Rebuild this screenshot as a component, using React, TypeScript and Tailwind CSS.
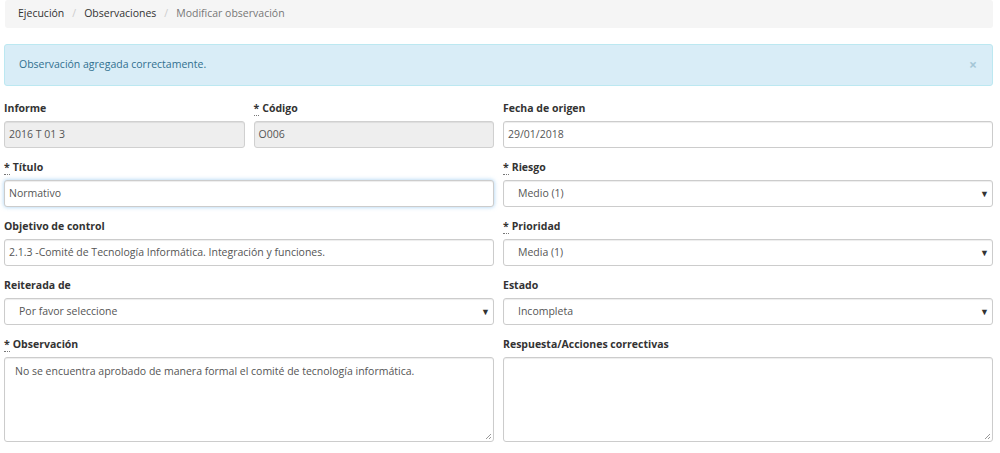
import React from "react";

const font = { fontFamily: '"Open Sans", "Liberation Sans", sans-serif' };

const Req = () => (
  <abbr title="Requerido" className="no-underline border-b border-dotted border-[#777] cursor-help mr-[3px]">
    *
  </abbr>
);

const Label: React.FC<{ text: string; req?: boolean }> = ({ text, req }) => (
  <label className="block text-[10.5px] leading-[17px] font-bold text-[#333] mb-[4px]">
    {req && <Req />}
    {text}
  </label>
);

const Input: React.FC<{ value: string; disabled?: boolean; focus?: boolean }> = ({ value, disabled, focus }) => (
  <div
    className={
      "h-[27px] rounded-[3px] border px-[4px] flex items-center text-[10.5px] text-[#555] " +
      (disabled ? "bg-[#eeeeee] border-[#d0d0d0] " : "bg-white border-[#ccc] ") +
      (focus ? "border-[#66afe9] shadow-[inset_0_1px_1px_rgba(0,0,0,0.075),0_0_4px_rgba(102,175,233,0.6)]" : "shadow-[inset_0_1px_1px_rgba(0,0,0,0.075)]")
    }
  >
    {value}
  </div>
);

const Select: React.FC<{ value: string }> = ({ value }) => (
  <div className="h-[27px] rounded-[3px] border border-[#ccc] bg-white pl-[14px] pr-[3px] flex items-center justify-between text-[10.5px] text-[#555] shadow-[inset_0_1px_1px_rgba(0,0,0,0.075)]">
    <span>{value}</span>
    <span className="text-[9px] text-[#333]">▼</span>
  </div>
);

const TextArea: React.FC<{ value?: string }> = ({ value }) => (
  <div className="relative h-[85px] rounded-[3px] border border-[#ccc] bg-white px-[10px] py-[5px] text-[10.5px] leading-[17px] text-[#555] shadow-[inset_0_1px_1px_rgba(0,0,0,0.075)]">
    {value}
    <svg className="absolute right-[1px] bottom-[1px]" width="7" height="7" viewBox="0 0 7 7">
      <path d="M6 1 L1 6 M6 4 L4 6" stroke="#999" strokeWidth="1" />
    </svg>
  </div>
);

const Field: React.FC<{ label: string; req?: boolean; span?: string; children: React.ReactNode }> = ({ label, req, span, children }) => (
  <div className={span ?? "col-span-2"}>
    <Label text={label} req={req} />
    {children}
  </div>
);

export default function App() {
  return (
    <div className="w-[1000px] h-[453px] bg-white pl-[4px] pr-[7px] overflow-hidden" style={font}>
      <ol className="ml-[1px] h-[28px] bg-[#f5f5f5] rounded-[3px] flex items-center px-[13px] text-[10.5px]">
        <li className="text-[#333]">Ejecución</li>
        <li className="text-[#ccc] px-[8px]">/</li>
        <li className="text-[#333]">Observaciones</li>
        <li className="text-[#ccc] px-[8px]">/</li>
        <li className="text-[#777]">Modificar observación</li>
      </ol>

      <div className="mt-[16px] h-[42px] rounded-[3px] border border-[#bce8f1] bg-[#d9edf7] flex items-center justify-between pl-[14px] pr-[15px] text-[10.5px] text-[#31708f]">
        <span>Observación agregada correctamente.</span>
        <span className="text-[14px] font-bold text-[#31708f] opacity-30 leading-none">×</span>
      </div>

      <div className="mt-[14px] grid grid-cols-4 gap-x-[9px] gap-y-[11px]">
        <Field label="Informe" span="col-span-1">
          <Input value="2016 T 01 3" disabled />
        </Field>
        <Field label="Código" req span="col-span-1">
          <Input value="O006" disabled />
        </Field>
        <Field label="Fecha de origen">
          <Input value="29/01/2018" />
        </Field>

        <Field label="Título" req>
          <Input value="Normativo" focus />
        </Field>
        <Field label="Riesgo" req>
          <Select value="Medio (1)" />
        </Field>

        <Field label="Objetivo de control">
          <Input value="2.1.3 -Comité de Tecnología Informática. Integración y funciones." />
        </Field>
        <Field label="Prioridad" req>
          <Select value="Media (1)" />
        </Field>

        <Field label="Reiterada de">
          <Select value="Por favor seleccione" />
        </Field>
        <Field label="Estado">
          <Select value="Incompleta" />
        </Field>

        <Field label="Observación" req>
          <TextArea value="No se encuentra aprobado de manera formal el comité de tecnología informática." />
        </Field>
        <Field label="Respuesta/Acciones correctivas">
          <TextArea />
        </Field>
      </div>
    </div>
  );
}
